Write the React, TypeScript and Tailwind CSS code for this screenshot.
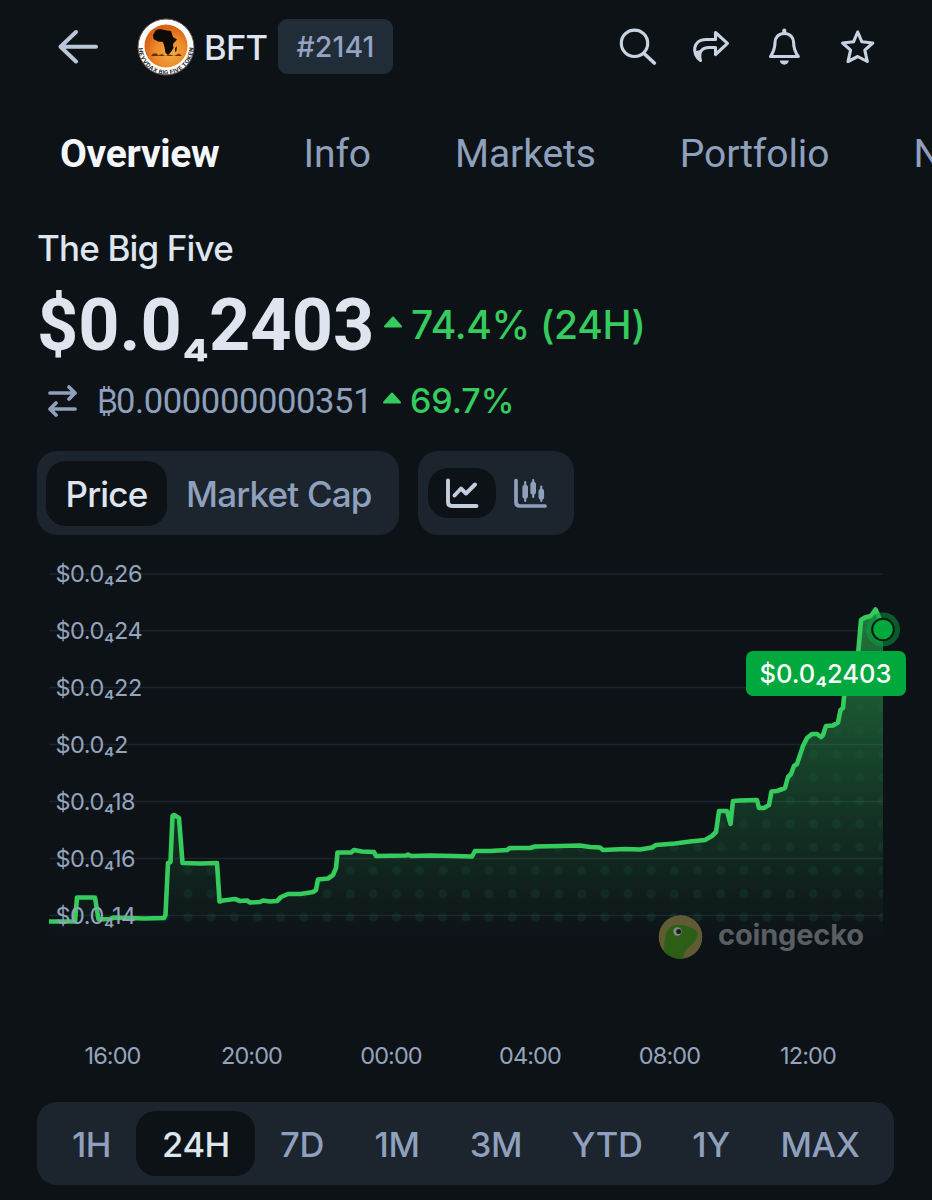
const tabs = ["Info", "Markets", "Portfolio", "News"];

const ranges = [
  { label: "1H", width: "w-[90px]" },
  { label: "24H", width: "w-[119px]", active: true },
  { label: "7D", width: "w-[93px]" },
  { label: "1M", width: "w-[97px]" },
  { label: "3M", width: "w-[101px]" },
  { label: "YTD", width: "w-[121px]" },
  { label: "1Y", width: "w-[87px]" },
  { label: "MAX", width: "w-[131px]" },
];

const yTicks = [
  { label: "$0.0₄26", y: 574 },
  { label: "$0.0₄24", y: 630.7 },
  { label: "$0.0₄22", y: 687.5 },
  { label: "$0.0₄2", y: 744.5 },
  { label: "$0.0₄18", y: 801.5 },
  { label: "$0.0₄16", y: 858.5 },
  { label: "$0.0₄14", y: 915.5 },
];

const xTicks = [
  { label: "16:00", x: 112.5 },
  { label: "20:00", x: 251.5 },
  { label: "00:00", x: 391 },
  { label: "04:00", x: 530 },
  { label: "08:00", x: 669.5 },
  { label: "12:00", x: 808 },
];

const line =
  "M49 921.5 L75 921.5 L77 897.5 L95 897.5 L98.5 919.5 L110 919 L114 917.5 L145 918.5 L164 918 L165.5 915 L168 863 L170.5 862 L172.5 816 L174 815 L179 818 L182.5 863 L200 863.5 L217 863 L219.5 901.5 L223 900.5 L235 899 L240 901 L247 900.5 L250 902.5 L260 902 L263 900.5 L270 901.5 L277 901 L281 897 L288 894 L300 894 L313 892 L316 890 L318 879.5 L328 878.5 L333 875 L336 868 L337.5 852.5 L351 852.5 L354 850 L362 851.5 L374 852 L376 856 L406 855.5 L408 854.5 L411 856 L430 855.5 L455 856 L472 856.5 L475 851 L490 851 L507 850 L510 848 L530 848 L535 846.5 L560 846 L580 845.5 L590 847 L600 847.5 L603 850 L625 849 L640 849.5 L652 847.5 L656 845 L675 843.5 L690 841.5 L705 840 L712 836 L716 832 L719 811 L727 811 L730.5 824 L733 801 L740 800.5 L757 800 L759 808 L764 808 L769 805 L771.5 791.5 L777 791 L785 788 L788 777 L791 774 L794 766 L797 764 L803 746 L807 738 L812 734 L817 734 L821 737 L823 735 L826 726 L833 725.5 L838 722.5 L840.5 710 L843 708 L844 697 L850 675 L858 655 L861 620 L865 617.5 L871 616 L875.5 609.5 L878 615 L883 629";

const CoinLogo = () => (
  <svg viewBox="0 0 58 58" className="w-[58px] h-[58px] shrink-0">
    <defs>
      <path id="ring" d="M4.5 29 A24.5 24.5 0 0 0 53.5 29" />
      <radialGradient id="sun" cx="0.6" cy="0.65" r="0.6">
        <stop offset="0" stopColor="#f5ac45" />
        <stop offset="0.6" stopColor="#ec8a2a" />
        <stop offset="1" stopColor="#d96214" />
      </radialGradient>
    </defs>
    <circle cx="29" cy="29" r="28" fill="#fff" stroke="#6b5650" strokeWidth="1" />
    <circle cx="29" cy="28" r="21.5" fill="url(#sun)" />
    <path d="M19 12 L23 11 L30 12.5 L34 13 L36 19 L40 21.5 L36 26 L36.5 30 L34 34 L31 37 L28.5 35 L27.5 29 L26 24 L21 23.5 L16.5 21 L16 17 Z" fill="#0e0a08" />
    <path d="M38 30 L40 28 L39.5 33 L38 34 Z" fill="#3a1c0c" />
    <path d="M14 38 L16 35.5 L20 35.5 L21 37.5 L25 36 L28 38 L33 36.5 L37 38 L42 35.5 L45 38 Z" fill="#6b2f0e" />
    <text fontSize="5.8" fontWeight="700" fill="#2a2a2a" className="font-['Inter',sans-serif]" dominantBaseline="central">
      <textPath href="#ring" startOffset="1" textLength="75">HEYVDAX BIG FIVE TOKEN</textPath>
    </text>
  </svg>
);

const HeaderIcons = () => (
  <div className="ml-auto flex items-center gap-[33px] text-[#c8d3e2]">
    <svg viewBox="617 27 40 40" className="w-10 h-10" fill="none" stroke="currentColor" strokeWidth="3.2" strokeLinecap="round">
      <circle cx="634.5" cy="43.3" r="13.2" />
      <path d="M644 53.5 L654.3 63" strokeWidth="3.7" />
    </svg>
    <svg viewBox="690 27 40 40" className="w-10 h-10" fill="none" stroke="currentColor" strokeWidth="3.1" strokeLinejoin="round">
      <path d="M715.5 32.5 L727.5 43.3 L715.5 54.5 V47.5 H709 C702 47.5 698 52 700.5 60.5 C691.5 54.5 692.5 39.5 706 39.5 H715.5 Z" />
      <path d="M695 52 Q696.5 57 700.5 60.5 Q698.5 55 699.5 51 Z" fill="currentColor" strokeWidth="1.5" />
    </svg>
    <svg viewBox="763 27 40 40" className="w-10 h-10" fill="none" stroke="currentColor" strokeWidth="3.1" strokeLinejoin="round" strokeLinecap="round">
      <path d="M784.3 30.5 V33" strokeWidth="4" />
      <path d="M784.3 33.5 C778.5 33.5 775 37.5 775 42.5 C775 49 773.5 52 770.5 56.5 H798.3 C795 52 793.6 49 793.6 42.5 C793.6 37.5 790 33.5 784.3 33.5 Z" />
      <path d="M779.8 60.5 H788.8 C788.5 66 780 66 779.8 60.5 Z" fill="currentColor" stroke="none" />
    </svg>
    <svg viewBox="836 27 40 40" className="w-10 h-10" fill="none" stroke="currentColor" strokeWidth="3.1" strokeLinejoin="round">
      <path d="M857.7 32 L861.9 41.8 L872.8 43 L864.8 50.2 L867.3 61.5 L857.7 56.5 L848 61.5 L850.6 50.2 L842.6 43 L853.5 41.8 Z" />
    </svg>
  </div>
);

const UpArrow = () => (
  <svg viewBox="0 0 18 12" className="mb-1.5 w-[18px] h-3 shrink-0" fill="#35cb5d" stroke="#35cb5d" strokeWidth="2" strokeLinejoin="round">
    <path d="M9 1.5 L17 10.5 H1 Z" />
  </svg>
);

const PriceChart = () => (
  <svg viewBox="0 535 932 567" className="block w-[932px] h-[567px] font-['Inter',sans-serif]">
    <defs>
      <linearGradient id="area" gradientUnits="userSpaceOnUse" x1="0" y1="610" x2="0" y2="938">
        <stop offset="0" stopColor="#35cb5d" stopOpacity="0.55" />
        <stop offset="0.5" stopColor="#2cb555" stopOpacity="0.27" />
        <stop offset="1" stopColor="#2cb555" stopOpacity="0" />
      </linearGradient>
      <pattern id="dots" patternUnits="userSpaceOnUse" x="176.4" y="719.5" width="23.16" height="23.25">
        <circle cx="11.6" cy="11.6" r="4.5" fill="#1f6b4b" fillOpacity="0.17" />
      </pattern>
    </defs>

    {yTicks.map((tick) => (
      <rect key={tick.y} x="49" y={tick.y - 0.7} width="834" height="1.4" fill="#1d242d" />
    ))}

    <path d={`${line} V938 H49 Z`} fill="url(#area)" />
    <path d={`${line} V923 H49 Z`} fill="url(#dots)" />
    <path d={line} fill="none" stroke="#35cb5d" strokeWidth="4.6" strokeLinejoin="round" />

    {yTicks.map((tick) => (
      <text key={tick.label} x="55.5" y={tick.y + 8.3} fontSize="23.5" letterSpacing="-0.5" fill="#94a3bb">
        {tick.label}
      </text>
    ))}

    {/* watermark */}
    <clipPath id="badge">
      <circle cx="680.5" cy="937" r="22" />
    </clipPath>
    <g clipPath="url(#badge)">
      <circle cx="680.5" cy="937" r="22" fill="#5f5c35" />
      <path d="M664 960 C664 948 664 934 669 928.5 C674 923.5 683 924.5 688 926.5 C694 928.5 699 931 697.5 936 C696 942 691 945 687 949 C684 953 683 956 683 960 Z" fill="#2c5f15" />
      <circle cx="677.5" cy="931.5" r="4.2" fill="#858a88" />
      <circle cx="678.7" cy="931.5" r="2.5" fill="#12201a" />
    </g>
    <text x="718" y="945" fontSize="29" fontWeight="700" fill="#595e63" textLength="146">
      coingecko
    </text>

    {/* current price */}
    <circle cx="883" cy="629.5" r="17" fill="#00a83e" fillOpacity="0.5" />
    <circle cx="883" cy="629.5" r="10.8" fill="#00a83e" stroke="#0b1713" strokeWidth="2" />
    <rect x="746" y="651" width="160" height="45" rx="7" fill="#00a83e" />
    <text x="825.5" y="682.5" fontSize="25.5" fontWeight="500" fill="#fff" textAnchor="middle" textLength="132">
      $0.0₄2403
    </text>

    {xTicks.map((tick) => (
      <text key={tick.label} x={tick.x} y="1064" fontSize="23.5" letterSpacing="-0.9" fill="#94a3bb" textAnchor="middle">
        {tick.label}
      </text>
    ))}
  </svg>
);

const App = () => {
  return (
    <div className="w-[932px] h-[1200px] overflow-hidden bg-[#0d1217] font-['Inter',sans-serif] text-[#dfe5ee]">
      <header className="flex h-[94px] items-center pl-[57px] pr-14">
        <svg viewBox="57 27 42 40" className="w-[42px] h-10" fill="none" stroke="#b9c7d8" strokeWidth="4" strokeLinecap="round" strokeLinejoin="round">
          <path d="M96 46.8 H60.5 M76 32 L60.5 46.8 L76 61.5" />
        </svg>
        <div className="ml-[38px]">
          <CoinLogo />
        </div>
        <span className="ml-[9px] w-[74px] pt-0.5 text-[34.5px] font-[450] tracking-[-0.7px]">BFT</span>
        <span className="-mt-px flex h-[55px] w-[115px] items-center justify-center rounded-[9px] bg-[#212c39] pt-0.5 text-[28.5px] font-[450] tracking-[0.1px] text-[#94a3c0]">
          #2141
        </span>
        <HeaderIcons />
      </header>

      <nav className="flex h-[118px] items-center gap-[84px] pl-[60px] pt-[2px] font-['Roboto',sans-serif] text-[39px] tracking-[-0.1px] text-[#8fa0bd]">
        <span className="shrink-0 font-bold tracking-[-0.3px] text-[#f4f7fb]">Overview</span>
        {tabs.map((tab) => (
          <span key={tab} className="shrink-0">
            {tab}
          </span>
        ))}
      </nav>

      <main>
        <h1 className="flex h-[72px] items-center pl-[37px] text-[35px] font-[450] tracking-[-0.85px]">The Big Five</h1>

        <div className="flex h-[82px] items-center pl-[37px]">
          <span className="w-[347px] whitespace-nowrap pt-0.5 font-['Roboto',sans-serif] text-[72px] font-bold leading-[82px]">
            $0.0<span className="relative top-[3px] font-['Inter',sans-serif] text-[57px] leading-none tracking-[-0.5px]">₄</span>2403
          </span>
          <UpArrow />
          <span className="ml-[9px] whitespace-nowrap pt-px text-[39px] font-[450] tracking-[-0.3px] text-[#35cb5d]">74.4% (24H)</span>
        </div>

        <div className="flex h-[70px] items-center pl-[47px]">
          <svg viewBox="47 383 30 34" className="w-[30px] h-[34px]" fill="none" stroke="#8fa0bd" strokeWidth="3.7" strokeLinecap="round" strokeLinejoin="round">
            <path d="M50 392 H75 M69 386 L75 392 L69 398 M75 408 H50 M56 402 L50 408 L56 414" />
          </svg>
          <span className="ml-5 w-[286px] whitespace-nowrap font-['Roboto',sans-serif] text-[34.5px] leading-[52px] tracking-[-0.35px] text-[#8fa0bd]">
            <span className="font-['Inter',sans-serif] text-[32px] leading-none tracking-[-2px]">₿</span>0.000000000351
          </span>
          <UpArrow />
          <span className="-mt-0.5 ml-[9px] text-[34px] font-[450] tracking-[-0.1px] text-[#35cb5d]">69.7%</span>
        </div>

        <div className="mt-[15px] flex h-[84px] gap-[19px] pl-[37px] text-[35px] tracking-[-0.8px]">
          <div className="flex w-[362px] items-center rounded-[20px] bg-[#1c242d] pl-[9px]">
            <button className="h-[65px] w-[121px] rounded-[20px] bg-[#0d1217] pt-0.5 font-medium">Price</button>
            <button className="ml-[19px] pt-0.5 font-medium text-[#8fa0bd]">Market Cap</button>
          </div>
          <div className="flex w-[156px] items-center rounded-[20px] bg-[#1c242d] pl-[10px]">
            <button className="flex h-[50px] w-[68px] items-center justify-center rounded-[20px] bg-[#0d1217]">
              <svg viewBox="445 477 34 32" className="w-[34px] h-8" fill="none" stroke="#c3cfdf" strokeWidth="3.9" strokeLinecap="round" strokeLinejoin="round">
                <path d="M448 480.5 V502 Q448 506 452 506 H476.5 M454.5 495.5 L461 488.5 L466 493.5 L475 484.5" />
              </svg>
            </button>
            <button className="flex h-[50px] w-[68px] items-center justify-center">
              <svg viewBox="513 477 34 32" className="w-[34px] h-8" fill="none" stroke="#8fa0bd" strokeWidth="3.7" strokeLinecap="round" strokeLinejoin="round">
                <path d="M516 480.5 V502 Q516 506 520 506 H545" />
                <path d="M525.2 482 V501 M533.2 480 V497 M541.3 486.5 V501" strokeWidth="2.2" />
                <path d="M525.2 487.5 V496 M533.2 484.5 V492 M541.3 491.5 V497" strokeWidth="5.6" />
              </svg>
            </button>
          </div>
        </div>

        <PriceChart />

        <div className="mx-[37px] flex h-[83px] w-[857px] items-center rounded-[20px] bg-[#1c242d] pl-[9px] text-[34.5px] font-medium tracking-[-0.4px]">
          {ranges.map((range) => (
            <button
              key={range.label}
              className={`h-[65px] shrink-0 rounded-[20px] pl-px pt-0.5 ${range.width} ${range.active ? "bg-[#0d1217]" : "text-[#8fa0bd]"}`}
            >
              {range.label}
            </button>
          ))}
        </div>
      </main>
    </div>
  );
};

export default App;
